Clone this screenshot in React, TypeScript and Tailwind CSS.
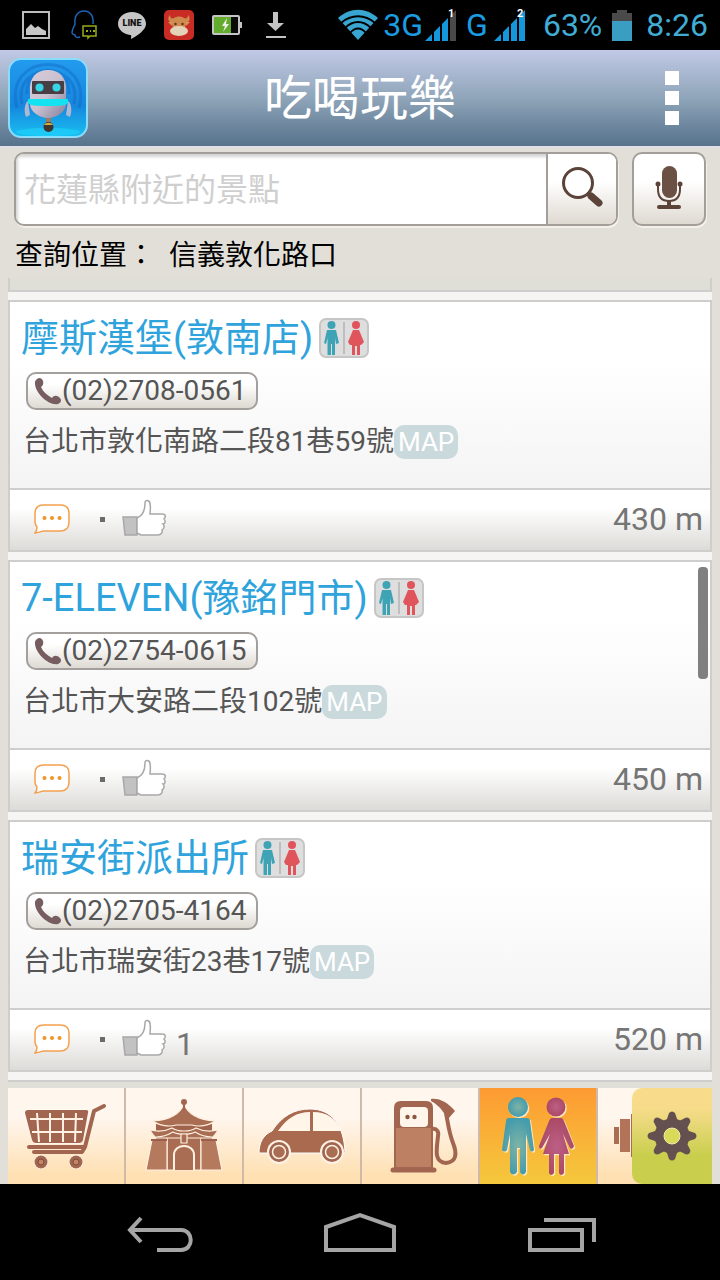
import type { ReactNode } from "react";

type Place = {
  name: string;
  phone: string;
  address: string;
  distance: string;
  likes?: number;
};

const places: Place[] = [
  {
    name: "摩斯漢堡(敦南店)",
    phone: "(02)2708-0561",
    address: "台北市敦化南路二段81巷59號",
    distance: "430 m",
  },
  {
    name: "7-ELEVEN(豫銘門市)",
    phone: "(02)2754-0615",
    address: "台北市大安路二段102號",
    distance: "450 m",
  },
  {
    name: "瑞安街派出所",
    phone: "(02)2705-4164",
    address: "台北市瑞安街23巷17號",
    distance: "520 m",
    likes: 1,
  },
];

function Signal({ sim, bars }: { sim: string; bars: number }) {
  return (
    <svg width="33" height="34" viewBox="0 0 33 34">
      <path d="M0 33 L7 26 V33 Z" fill="#1597dc" />
      <path d="M9 24 L15 18 V33 H9 Z" fill="#1597dc" />
      <path d="M17 16 L23 10 V33 H17 Z" fill="#1597dc" />
      <path d="M25 8 L31 2 V33 H25 Z" fill={bars === 4 ? "#1597dc" : "#4a4a4a"} />
      <text x="23" y="9" fontSize="11" fontWeight="bold" fill="#fff">
        {sim}
      </text>
    </svg>
  );
}

function StatusBar() {
  return (
    <div className="flex h-[50px] shrink-0 items-center justify-between bg-black pl-[22px] pr-3 text-[32px] leading-none text-[#41add5]">
      <div className="flex items-center gap-[18px]">
        <svg width="28" height="28" viewBox="0 0 28 28">
          <rect x="1" y="1" width="26" height="26" fill="none" stroke="#bdbdbd" strokeWidth="2" />
          <path d="M4 24 V18 L9 13 L13 17 L16 15 L20 18 L24 20 V24 Z" fill="#c8c8c8" />
        </svg>
        <svg width="32" height="30" viewBox="-3 0 32 30">
          <path
            d="M9 27 C6 28 4 27 4 25 C3 24 2 25 1 23 C1 19 3 17 4 14 C3 6 7 1 13 1 C19 1 23 6 22 14"
            fill="none"
            stroke="#1c64b8"
            strokeWidth="1.5"
          />
          <path d="M12 16 H25 V26 H19 L17 28 V26 H12 Z" fill="#000" stroke="#98ab18" strokeWidth="1.5" />
          <path d="M15 21 h2 m2 0 h1 m2 0 h2" stroke="#98ab18" strokeWidth="2" />
        </svg>
        <svg width="28" height="28" viewBox="0 0 28 28">
          <path d="M14 1 C6 1 0 6 0 13 C0 19 6 23 12 24 C14 24 13 26 13 28 C19 25 28 19 28 13 C28 6 22 1 14 1 Z" fill="#c6c6c6" />
          <text x="14" y="15" fontSize="9" fontWeight="900" textAnchor="middle" fill="#111">
            LINE
          </text>
        </svg>
        <svg width="30" height="30" viewBox="0 0 30 30">
          <rect width="30" height="30" rx="5" fill="#c92b25" />
          <path d="M6 5 C3 8 4 13 9 12 H21 C26 13 27 8 24 5 C24 8 22 9 20 8 C17 6 13 6 10 8 C8 9 6 8 6 5 Z" fill="#cf8a50" />
          <path d="M8 10 H22 L21 20 H9 Z" fill="#cf8a50" />
          <path d="M4 12 L9 12 L8 16 Z M26 12 L21 12 L22 16 Z" fill="#d99555" />
          <ellipse cx="15" cy="21" rx="9" ry="5" fill="#e3d3b8" />
          <circle cx="11.5" cy="14" r="1.2" fill="#532" />
          <circle cx="18.5" cy="14" r="1.2" fill="#532" />
        </svg>
        <svg width="30" height="20" viewBox="0 0 30 20">
          <rect x="1" y="1" width="26" height="18" rx="1" fill="#0a0a0a" stroke="#c4c4c4" strokeWidth="2" />
          <rect x="28" y="7" width="2" height="6" fill="#c4c4c4" />
          <rect x="2" y="2" width="17" height="16" fill="#63ab2c" />
          <path d="M15 3 L10 11 H13 L11 17 L17 9 H14 Z" fill="#eee" />
        </svg>
        <svg width="26" height="28" viewBox="0 0 26 28">
          <path d="M13 1 H18 V12 H24 L15.5 20 L7 12 H13 Z" fill="#c4c4c4" />
          <rect x="6" y="25" width="20" height="2" fill="#c4c4c4" />
        </svg>
      </div>
      <div className="flex items-center">
        <svg width="42" height="32" viewBox="0 0 42 32" className="mr-1">
          <path d="M1 9 C13 -2 29 -2 41 9 L21 31 Z" fill="#38a6d0" />
          <path
            d="M4 14 C14 5 28 5 38 14 M8 19 C16 11 26 11 34 19 M13 24 C18 18 24 18 29 24"
            fill="none"
            stroke="#000"
            strokeWidth="1.8"
          />
        </svg>
        <span className="text-[#1b9be0]">3G</span>
        <span className="ml-0.5 mr-2">
          <Signal sim="1" bars={3} />
        </span>
        <span className="text-[#1b9be0]">G</span>
        <span className="ml-1.5 mr-4">
          <Signal sim="2" bars={4} />
        </span>
        <span>63%</span>
        <svg width="20" height="31" viewBox="0 0 20 31" className="ml-2.5 mr-3.5">
          <path d="M5 0 H15 V3 H20 V12 H0 V3 H5 Z" fill="#4a4a4a" />
          <rect y="11" width="20" height="20" fill="#3a9dc2" />
        </svg>
        <span>8:26</span>
      </div>
    </div>
  );
}

function RobotIcon() {
  return (
    <svg width="80" height="80" viewBox="0 0 80 80">
      <defs>
        <linearGradient id="robotSky" x1="0" y1="0" x2="0" y2="1">
          <stop offset="0" stopColor="#229bee" />
          <stop offset="0.6" stopColor="#1687dd" />
          <stop offset="1" stopColor="#19c0f2" />
        </linearGradient>
        <linearGradient id="robotShell" x1="0" y1="0" x2="1" y2="1">
          <stop offset="0" stopColor="#d9cdd8" />
          <stop offset="0.5" stopColor="#c9c0d0" />
          <stop offset="1" stopColor="#857f9c" />
        </linearGradient>
      </defs>
      <rect x="1" y="1" width="78" height="78" rx="12" fill="url(#robotSky)" stroke="#8adcfb" strokeWidth="2" />
      <g fill="none" stroke="#1268c6" strokeWidth="3" opacity="0.45">
        <path d="M14 46 C4 2 76 2 66 46" />
        <path d="M9 50 C-6 -8 86 -8 71 50" />
        <path d="M19 36 C17 4 63 4 61 36" />
      </g>
      <ellipse cx="40" cy="74" rx="32" ry="4" fill="#1fd0fa" opacity="0.7" />
      <path d="M20 43 C16 46 16 54 18 59 L22 57 Z M60 43 C64 46 64 54 62 59 L58 57 Z" fill="#aeb7d4" />
      <path d="M40 12 C28 12 22 20 22 30 V46 C22 54 32 60 40 60 C48 60 58 54 58 46 V30 C58 20 52 12 40 12 Z" fill="url(#robotShell)" />
      <rect x="24" y="23" width="32" height="13" rx="1" fill="#473d42" />
      <circle cx="31.500" cy="29.500" r="4" fill="#36d6e6" />
      <circle cx="48.500" cy="29.500" r="4" fill="#36d6e6" />
      <path d="M20 41 H60 V45 C58 48 50 48 40 48 C30 48 22 48 20 45 Z" fill="#13e2f1" />
      <rect x="38" y="60" width="5" height="6" fill="#9c7c62" />
      <circle cx="40.500" cy="69" r="5" fill="#3e3430" />
      <path d="M36 67 C38 64 43 64 45 67 Z" fill="#dcae3d" />
    </svg>
  );
}

function RestroomIcon() {
  return (
    <svg width="50" height="40" viewBox="0 0 50 40" className="shrink-0">
      <rect x="1" y="1" width="48" height="38" rx="6" fill="#dedede" stroke="#c6c6c6" strokeWidth="2" />
      <path d="M25 4 V36" stroke="#b3b3b3" strokeWidth="1.5" />
      <g fill="#3ea4b5">
        <circle cx="12.500" cy="7" r="4" />
        <path d="M8 12 H17 L20 25 L17 26 L16 20 V37 H13 V26 H12 V37 H8.500 V20 L7 26 L5 25 Z" />
      </g>
      <g fill="#e0555c">
        <circle cx="37" cy="7" r="4" />
        <path d="M34 12 H40 L45 24 L42 27 H41 V37 H38 V28 H36 V37 H33 V27 H31 L29 24 Z" />
      </g>
    </svg>
  );
}

function PlaceCard({ place }: { place: Place }) {
  return (
    <article className="shrink-0 border-2 border-[#cfcecc]">
      <div className="bg-linear-to-b from-white from-30% to-[#f4f4f4] pb-7 pl-[11px] pt-3.5">
        <div className="flex items-center gap-1.5">
          <h2 className="text-[38px] leading-11 text-[#2fa3dc]">{place.name}</h2>
          <RestroomIcon />
        </div>
        <button
          type="button"
          className="ml-[5px] mt-3 flex h-[38px] w-[232px] items-center rounded-[10px] border-2 border-[#a39f9d] bg-linear-to-b from-white from-30% to-[#dedad3] pl-1.5 text-[28px] leading-8 text-[#555]"
        >
          <svg width="28" height="28" viewBox="0 0 28 28" className="shrink-0">
            <path
              d="M3 2 C5 0 8 1 9 4 C10 8 8 9 7 10 C9 15 13 18 18 21 C20 18 23 18 26 21 C28 23 27 26 24 27 C14 29 0 15 1 5 C1 4 2 3 3 2 Z"
              fill="#775c60"
            />
          </svg>
          {place.phone}
        </button>
        <div className="ml-0.5 mt-3.5 flex h-9 items-center text-[28px] leading-9 text-[#555]">
          <p>{place.address}</p>
          <a href="#map" className="rounded-[10px] bg-[#cad9dc] px-1 text-[26px] leading-[34px] text-white">
            MAP
          </a>
        </div>
      </div>
      <div className="flex h-[62px] items-center border-t-2 border-[#cfcecc] bg-linear-to-b from-white from-30% to-[#dcdbd7] pb-0.5 pl-6 pr-[7px] text-[32px] leading-9 text-[#757575]">
        <button type="button" aria-label="Comments">
          <svg width="36" height="30" viewBox="0 0 36 30">
            <path
              d="M10 1 H26 C32 1 35 4 35 9 V18 C35 24 32 27 26 27 H10 C7 27 5 29 1 29 C3 27 3 25 3 23 C1 21 1 19 1 18 V9 C1 4 4 1 10 1 Z"
              fill="#fff"
              stroke="#f3a04e"
              strokeWidth="1.5"
            />
            <g fill="#f09422">
              <circle cx="10.500" cy="14" r="2" />
              <circle cx="18" cy="14" r="2" />
              <circle cx="25.500" cy="14" r="2" />
            </g>
          </svg>
        </button>
        <span className="ml-[30px] size-[5px] bg-[#6b6b6b]" />
        <button type="button" aria-label="Like" className="ml-[17px]">
          <svg width="46" height="40" viewBox="0 0 46 40">
            <path d="M1 18 H15 V36 H3 Z" fill="#c2c2c2" stroke="#a8a8a8" strokeWidth="1.5" />
            <path
              d="M15 19 C20 17 23 12 23 4 C23 0 28 1 28 5 C29 9 28 12 28 15 H40 C44 15 44 18 42 20 C44 22 43 25 41 25 C43 27 42 30 40 31 C41 33 39 36 36 36 H19 L15 34 Z"
              fill="#fff"
              stroke="#a8a8a8"
              strokeWidth="1.5"
            />
          </svg>
        </button>
        {place.likes && <span className="ml-2 mt-2.5">{place.likes}</span>}
        <span className="ml-auto">{place.distance}</span>
      </div>
    </article>
  );
}

function CartIcon() {
  return (
    <svg width="116" height="96" viewBox="0 0 116 96">
      <g fill="#a26650" stroke="#fff" strokeWidth="1" paintOrder="stroke">
        <path d="M20 22 H78 Q81 22 80 25 L75 52 Q74 55 71 55 H28 Q25 55 24 52 L17 25 Q17 22 20 22 Z" />
        <circle cx="33" cy="74" r="6.5" />
        <circle cx="68" cy="74" r="6.5" />
      </g>
      <path d="M22 31 H75 M24 44 H74 M29 25 L31 54 M42 25 V54 M55 25 V54 M68 25 L67 54" stroke="#fff2e4" strokeWidth="2" />
      <path d="M96 18 L86 23 L77 59 H21 M26 64 H74 L77 59" fill="none" stroke="#a26650" strokeWidth="4" strokeLinecap="round" strokeLinejoin="round" />
      <circle cx="33" cy="74" r="3" fill="#c28465" stroke="#7d4d3b" />
      <circle cx="68" cy="74" r="3" fill="#c28465" stroke="#7d4d3b" />
    </svg>
  );
}

function TempleIcon() {
  return (
    <svg width="116" height="96" viewBox="0 0 116 96">
      <path d="M30 36 H86 V52 H30 Z" fill="#a0644c" />
      <g fill="#a86d52" stroke="#fff0e0" strokeWidth="1.2" strokeLinejoin="round">
        <path d="M41 46 H75 V82 H41 Z" />
        <path d="M26 52 H41 V82 H20 Z M75 52 H90 L96 82 H75 Z" fill="#b5795d" />
        <path d="M24 42 C32 44 40 43 46 40 C52 44 64 44 70 40 C76 43 84 44 92 42 C90 46 88 48 86 50 H30 C28 48 26 46 24 42 Z" />
        <path d="M58 16 C54 26 43 32 27 33 C33 38 44 39 50 37 H66 C72 39 83 38 89 33 C73 32 62 26 58 16 Z" />
        <path d="M30 49 C36 49 42 47 47 44 C52 47 64 47 69 44 C74 47 80 49 86 49" fill="none" />
        <rect x="55" y="46" width="6" height="9" />
        <path d="M48 82 V67 C48 55 68 55 68 67 V82" strokeWidth="2" />
      </g>
      <path d="M25 52 H41 M75 52 H91" stroke="#9c604a" strokeWidth="2" />
      <path d="M58 14 V23" stroke="#a26650" strokeWidth="2" />
      <circle cx="58" cy="14" r="3" fill="#a26650" />
    </svg>
  );
}

function CarIcon() {
  return (
    <svg width="116" height="96" viewBox="0 0 116 96">
      <path d="M15 65 C15 55 19 47 28 43 C38 28 50 21 66 21 C87 21 100 36 101 65 Z" fill="#a96a50" stroke="#fff" strokeWidth="1" />
      <path d="M34 43 C43 30 53 24 66 24 V43 Z M69 24 C83 24 93 31 97 43 H69 Z" fill="#fff5e9" />
      <g fill="#fff2e4">
        <circle cx="35" cy="64" r="12" />
        <circle cx="88" cy="64" r="12" />
      </g>
      <g fill="#a26650" stroke="#a26650" strokeWidth="2">
        <circle cx="35" cy="64" r="9" />
        <circle cx="88" cy="64" r="9" />
      </g>
      <g fill="#a86d52" stroke="#fff2e4" strokeWidth="1.5">
        <circle cx="35" cy="64" r="6.5" />
        <circle cx="88" cy="64" r="6.5" />
      </g>
    </svg>
  );
}

function FuelIcon() {
  return (
    <svg width="116" height="96" viewBox="0 0 116 96">
      <path d="M33 80 V20 Q33 14 39 14 H64 Q70 14 70 20 V80 Z" fill="#bd8062" stroke="#a26650" strokeWidth="2" />
      <path d="M33 40 V20 Q33 14 39 14 H64 Q70 14 70 20 V40 Z" fill="#a26650" />
      <rect x="38" y="19" width="28" height="20" rx="4" fill="#fff5ea" />
      <circle cx="45.500" cy="29" r="2.200" fill="#8b543f" />
      <circle cx="52.500" cy="29" r="2.200" fill="#8b543f" />
      <path d="M31 82 H72" stroke="#a26650" strokeWidth="5" strokeLinecap="round" />
      <path d="M70 41 C75 40 77 44 76 48 C75 60 71 74 84 75 C95 74 95 65 91 55 C87 45 86 35 84 25" fill="none" stroke="#a26650" strokeWidth="4" />
      <path d="M69 11 C78 10 86 15 93 23 L86 31 C82 26 80 19 69 13 Z" fill="#a26650" />
    </svg>
  );
}

function PeopleIcon() {
  return (
    <svg width="116" height="96" viewBox="0 0 116 96">
      <defs>
        <radialGradient id="manFill">
          <stop offset="0" stopColor="#7fb3a4" />
          <stop offset="1" stopColor="#459cad" />
        </radialGradient>
        <radialGradient id="womanFill">
          <stop offset="0" stopColor="#bd5f86" />
          <stop offset="1" stopColor="#ab4a66" />
        </radialGradient>
      </defs>
      {[0, 1].map((layer) => (
        <g key={layer} transform={layer === 0 ? "translate(1.200 1.200)" : undefined}>
          <g fill={layer === 0 ? "#ffe9c4" : "url(#manFill)"}>
            <circle cx="38" cy="19" r="10" />
            <path d="M29 30 H47 Q50 30 50 33 L54 62 Q52 65 50 62 L46 46 V84 Q43 89 40 84 V60 H37 V84 Q33 89 30 84 V46 L27 62 Q25 65 22 62 L26 33 Q26 30 29 30 Z" />
          </g>
          <g fill={layer === 0 ? "#ffe9c4" : "url(#womanFill)"}>
            <circle cx="76" cy="19" r="9.5" />
            <path d="M72 30 H81 Q83 30 84 33 L94 58 Q93 62 90 60 L83 46 L89 66 H84 V85 Q81 89 79 85 V66 H74 V85 Q71 89 69 85 V66 H63 L70 46 L62 60 Q59 62 59 58 L69 33 Q70 30 72 30 Z" />
          </g>
        </g>
      ))}
    </svg>
  );
}

function DumbbellIcon() {
  return (
    <svg width="116" height="96" viewBox="0 0 116 96">
      <g fill="#a86d52">
        <rect x="16" y="39" width="5" height="17" />
        <rect x="22" y="31" width="10" height="33" fill="#b37358" />
        <rect x="33" y="26" width="9" height="43" />
        <rect x="42" y="43" width="32" height="9" />
        <rect x="74" y="26" width="9" height="43" />
        <rect x="84" y="31" width="10" height="33" />
        <rect x="95" y="39" width="5" height="17" />
      </g>
    </svg>
  );
}

function GearIcon() {
  return (
    <svg width="80" height="96" viewBox="0 0 80 96">
      <g fill="#64504e">
        {[0, 45, 90, 135, 180, 225, 270, 315].map((angle) => (
          <path key={angle} d="M34 34 L37 25 Q40 22 43 25 L46 34 Z" transform={`rotate(${angle} 40 48)`} />
        ))}
        <circle cx="40" cy="48" r="17.5" />
      </g>
      <circle cx="40" cy="48" r="8" fill="#d9da58" stroke="#f0ecb0" />
    </svg>
  );
}

const tabs: { label: string; icon: ReactNode; active?: boolean }[] = [
  { label: "Shopping", icon: <CartIcon /> },
  { label: "Sights", icon: <TempleIcon /> },
  { label: "Parking", icon: <CarIcon /> },
  { label: "Fuel", icon: <FuelIcon /> },
  { label: "Restrooms", icon: <PeopleIcon />, active: true },
  { label: "Sports", icon: <DumbbellIcon /> },
];

export default function App() {
  return (
    <div className="flex h-screen flex-col overflow-hidden bg-[#e2dfd8] font-['Roboto','Noto_Sans_CJK_TC',sans-serif]">
      <StatusBar />

      <header className="flex h-24 shrink-0 items-center justify-between bg-linear-to-b from-[#c1c9e6] via-[#8fa5b9] to-[#56728c] px-2">
        <RobotIcon />
        <h1 className="pt-0.5 text-[48px] leading-none text-white">吃喝玩樂</h1>
        <button type="button" aria-label="Menu" className="flex w-20 flex-col items-center gap-1.5">
          <span className="size-3.5 bg-white" />
          <span className="size-3.5 bg-white" />
          <span className="size-3.5 bg-white" />
        </button>
      </header>

      <section className="shrink-0 border-t-2 border-[#dfe0e4] px-3.5 pt-1">
        <form className="flex h-[74px] gap-3.5" onSubmit={(e) => e.preventDefault()}>
          <div className="flex min-w-0 flex-1 overflow-hidden rounded-[10px] border-2 border-[#a39e99] bg-white shadow-[1px_2px_0_#f5f0ea]">
            <input
              type="text"
              aria-label="花蓮縣附近的景點"
              placeholder="花蓮縣附近的景點"
              className="min-w-0 flex-1 px-2 pt-0.5 text-[32px] shadow-[inset_2px_3px_3px_#d5d5d5] outline-none placeholder:text-[#cfcfcf]"
            />
            <button
              type="submit"
              aria-label="Search"
              className="flex w-[70px] items-center justify-center border-l-2 border-[#a39e99] bg-linear-to-b from-white from-40% to-[#dfd9d1]"
            >
              <svg width="44" height="44" viewBox="0 0 44 44">
                <circle cx="18" cy="16" r="14.5" fill="#fff" stroke="#5b4339" strokeWidth="3" />
                <path d="M27 26 L31 29" stroke="#5b4339" strokeWidth="4" />
                <path d="M31 29 L39 36" stroke="#5b4339" strokeWidth="7" strokeLinecap="round" />
              </svg>
            </button>
          </div>
          <button
            type="button"
            aria-label="Voice search"
            className="flex w-[74px] items-center justify-center rounded-[10px] border-2 border-[#a39e99] bg-linear-to-b from-white from-40% to-[#dfd9d1] shadow-[1px_2px_0_#f5f0ea]"
          >
            <svg width="28" height="48" viewBox="0 0 28 48">
              <rect x="7" y="1" width="15" height="32" rx="7.5" fill="#6b5044" />
              <path d="M3 20 V24 C3 33 8 36 14 36 C20 36 25 33 25 24 V20" fill="none" stroke="#5b4339" strokeWidth="2" />
              <circle cx="3" cy="19" r="2.5" fill="#5b4339" />
              <circle cx="25" cy="19" r="2.5" fill="#5b4339" />
              <path d="M14 36 V41" stroke="#5b4339" strokeWidth="4" />
              <path d="M4 42 H24" stroke="#5b4339" strokeWidth="4" strokeLinecap="round" />
            </svg>
          </button>
        </form>
        <p className="whitespace-pre pb-0.5 pl-px pt-2.5 text-[28px] leading-10 text-black">查詢位置：  信義敦化路口</p>
      </section>

      <main className="relative mx-2 flex min-h-0 flex-1 flex-col gap-2 overflow-hidden bg-[#f6f5f3]">
        {/* tail of the card scrolled off the top */}
        <div className="h-3.5 shrink-0 border-x-2 border-b-2 border-[#cfcecc] bg-[#dfdfd8]" />
        {places.map((place) => (
          <PlaceCard key={place.name} place={place} />
        ))}
        <div className="h-2 shrink-0 border-t-2 border-[#cfcecc] bg-[#e0e0d9]" />
        <div className="absolute right-1 top-[289px] h-28 w-2.5 rounded-sm bg-[#808080]" />
      </main>

      <nav className="relative mx-2 flex h-24 shrink-0 overflow-hidden">
        {tabs.map((tab) => (
          <button
            key={tab.label}
            type="button"
            aria-label={tab.label}
            className={
              tab.active
                ? "w-[118px] shrink-0 border-r-2 border-[#d0b9a6] bg-linear-to-b from-[#fd9a33] to-[#f4c83c]"
                : "w-[118px] shrink-0 border-r-2 border-[#d0b9a6] bg-linear-to-b from-[#fff6ee] from-30% to-[#fee0b3] to-90%"
            }
          >
            {tab.icon}
          </button>
        ))}
        <button
          type="button"
          aria-label="Settings"
          className="absolute right-0 top-0 rounded-l-[10px] bg-linear-to-b from-[#f8dc8c] from-20% to-[#c9cf4c] to-70%"
        >
          <GearIcon />
        </button>
      </nav>

      <footer className="grid h-24 shrink-0 grid-cols-3 items-center bg-black px-[60px]">
        <button type="button" aria-label="Back" className="flex justify-center">
          <svg width="72" height="40" viewBox="0 0 72 40" fill="none" stroke="#a5a5a5" strokeWidth="4">
            <path d="M17 6 L6 18 L17 30 M6 18 H57 C70 18 70 38 57 38 H33" />
          </svg>
        </button>
        <button type="button" aria-label="Home" className="flex justify-center">
          <svg width="72" height="40" viewBox="0 0 72 40" fill="none" stroke="#a5a5a5" strokeWidth="4">
            <path d="M2 38 V15 L36 3 L70 15 V38 Z" />
          </svg>
        </button>
        <button type="button" aria-label="Recent apps" className="flex justify-center">
          <svg width="72" height="40" viewBox="0 0 72 40" fill="none" stroke="#a5a5a5" strokeWidth="4">
            <rect x="6" y="18" width="52" height="20" />
            <path d="M20 8 H70 V30" />
          </svg>
        </button>
      </footer>
    </div>
  );
}
